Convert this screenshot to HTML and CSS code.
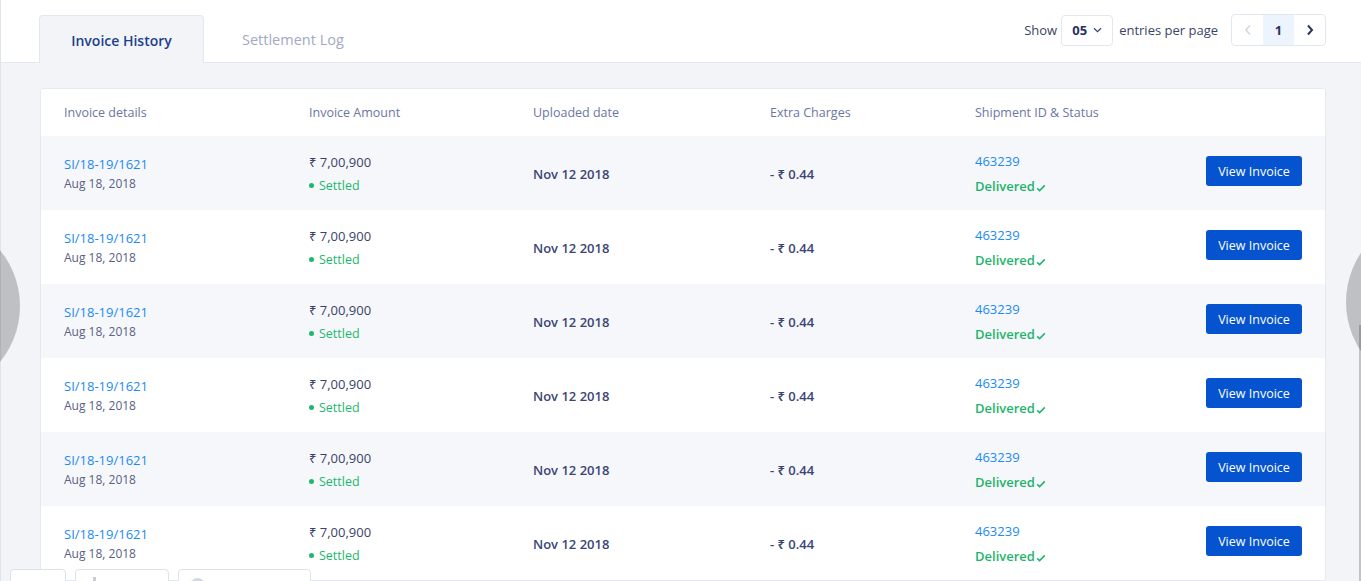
FILE: index.html
```html
<!DOCTYPE html>
<html lang="en">
<head>
<meta charset="utf-8">
<title>Invoices</title>
<link rel="stylesheet" href="styles.css">
</head>
<body>
<div class="app">
  <header class="topbar">
    <nav class="tabs">
      <div class="tab active">Invoice History</div>
      <div class="tab">Settlement Log</div>
    </nav>
    <div class="controls">
      <span class="lbl">Show</span>
      <div class="select"><span>05</span>
        <svg width="9" height="6" viewBox="0 0 9 6"><path d="M1 1.2 L4.5 4.6 L8 1.2" fill="none" stroke="#3a4470" stroke-width="1.2"/></svg>
      </div>
      <span class="lbl">entries per page</span>
      <div class="pager">
        <div class="pg"><svg width="8" height="12" viewBox="0 0 8 12"><path d="M6 1.5 L2 6 L6 10.5" fill="none" stroke="#d3d7e1" stroke-width="1.6"/></svg></div>
        <div class="pg cur">1</div>
        <div class="pg"><svg width="8" height="12" viewBox="0 0 8 12"><path d="M2 1.5 L6 6 L2 10.5" fill="none" stroke="#2c3563" stroke-width="2"/></svg></div>
      </div>
    </div>
  </header>
  <main class="main">
    <section class="card">
      <div class="row head">
        <div>Invoice details</div>
        <div>Invoice Amount</div>
        <div>Uploaded date</div>
        <div>Extra Charges</div>
        <div>Shipment ID &amp; Status</div>
        <div></div>
      </div>
      <div class="row alt">
        <div class="c-inv"><div class="inv-no">SI/18-19/1621</div><div class="inv-date">Aug 18, 2018</div></div>
        <div class="c-amt"><div class="amt">₹ 7,00,900</div><div class="settled"><i class="dot"></i>Settled</div></div>
        <div class="strong">Nov 12 2018</div>
        <div class="strong">- ₹ 0.44</div>
        <div class="c-ship"><div class="ship-id">463239</div><div class="deliv">Delivered<svg width="10" height="8" viewBox="0 0 10 8"><path d="M1.2 4.4 L3.6 6.6 L8.8 1.4" fill="none" stroke="#1db46a" stroke-width="1.5"/></svg></div></div>
        <div class="c-btn"><button class="btn">View Invoice</button></div>
      </div>
      <div class="row">
        <div class="c-inv"><div class="inv-no">SI/18-19/1621</div><div class="inv-date">Aug 18, 2018</div></div>
        <div class="c-amt"><div class="amt">₹ 7,00,900</div><div class="settled"><i class="dot"></i>Settled</div></div>
        <div class="strong">Nov 12 2018</div>
        <div class="strong">- ₹ 0.44</div>
        <div class="c-ship"><div class="ship-id">463239</div><div class="deliv">Delivered<svg width="10" height="8" viewBox="0 0 10 8"><path d="M1.2 4.4 L3.6 6.6 L8.8 1.4" fill="none" stroke="#1db46a" stroke-width="1.5"/></svg></div></div>
        <div class="c-btn"><button class="btn">View Invoice</button></div>
      </div>
      <div class="row alt">
        <div class="c-inv"><div class="inv-no">SI/18-19/1621</div><div class="inv-date">Aug 18, 2018</div></div>
        <div class="c-amt"><div class="amt">₹ 7,00,900</div><div class="settled"><i class="dot"></i>Settled</div></div>
        <div class="strong">Nov 12 2018</div>
        <div class="strong">- ₹ 0.44</div>
        <div class="c-ship"><div class="ship-id">463239</div><div class="deliv">Delivered<svg width="10" height="8" viewBox="0 0 10 8"><path d="M1.2 4.4 L3.6 6.6 L8.8 1.4" fill="none" stroke="#1db46a" stroke-width="1.5"/></svg></div></div>
        <div class="c-btn"><button class="btn">View Invoice</button></div>
      </div>
      <div class="row">
        <div class="c-inv"><div class="inv-no">SI/18-19/1621</div><div class="inv-date">Aug 18, 2018</div></div>
        <div class="c-amt"><div class="amt">₹ 7,00,900</div><div class="settled"><i class="dot"></i>Settled</div></div>
        <div class="strong">Nov 12 2018</div>
        <div class="strong">- ₹ 0.44</div>
        <div class="c-ship"><div class="ship-id">463239</div><div class="deliv">Delivered<svg width="10" height="8" viewBox="0 0 10 8"><path d="M1.2 4.4 L3.6 6.6 L8.8 1.4" fill="none" stroke="#1db46a" stroke-width="1.5"/></svg></div></div>
        <div class="c-btn"><button class="btn">View Invoice</button></div>
      </div>
      <div class="row alt">
        <div class="c-inv"><div class="inv-no">SI/18-19/1621</div><div class="inv-date">Aug 18, 2018</div></div>
        <div class="c-amt"><div class="amt">₹ 7,00,900</div><div class="settled"><i class="dot"></i>Settled</div></div>
        <div class="strong">Nov 12 2018</div>
        <div class="strong">- ₹ 0.44</div>
        <div class="c-ship"><div class="ship-id">463239</div><div class="deliv">Delivered<svg width="10" height="8" viewBox="0 0 10 8"><path d="M1.2 4.4 L3.6 6.6 L8.8 1.4" fill="none" stroke="#1db46a" stroke-width="1.5"/></svg></div></div>
        <div class="c-btn"><button class="btn">View Invoice</button></div>
      </div>
      <div class="row">
        <div class="c-inv"><div class="inv-no">SI/18-19/1621</div><div class="inv-date">Aug 18, 2018</div></div>
        <div class="c-amt"><div class="amt">₹ 7,00,900</div><div class="settled"><i class="dot"></i>Settled</div></div>
        <div class="strong">Nov 12 2018</div>
        <div class="strong">- ₹ 0.44</div>
        <div class="c-ship"><div class="ship-id">463239</div><div class="deliv">Delivered<svg width="10" height="8" viewBox="0 0 10 8"><path d="M1.2 4.4 L3.6 6.6 L8.8 1.4" fill="none" stroke="#1db46a" stroke-width="1.5"/></svg></div></div>
        <div class="c-btn"><button class="btn">View Invoice</button></div>
      </div>
    </section>
  </main>
</div>

<div class="nav-circle left"></div>
<div class="nav-circle right"></div>
<div class="scroll-line"></div>

<div class="dock">
  <div class="dock-item w1"></div>
  <div class="dock-item w2"><i class="dock-icon"></i></div>
  <div class="dock-item w3"><i class="dock-avatar"></i></div>
</div>
</body>
</html>
```

FILE: styles.css
```css
* { box-sizing: border-box; }
html, body { margin: 0; padding: 0; }
body {
  font-family: "Open Sans", "Noto Sans", "Liberation Sans", sans-serif;
  background: #f3f4f8;
  color: #3a4470;
  overflow: hidden;
  height: 581px;
}
.app {
  border-left: 1px solid #dfe3ea;
  height: 581px;
  display: flex;
  flex-direction: column;
}
.topbar {
  height: 63px;
  flex: none;
  background: #fff;
  border-bottom: 1px solid #e3e7ef;
  display: flex;
  justify-content: space-between;
  align-items: flex-end;
  padding: 0 35px 0 38px;
}
.tabs {
  display: flex;
  align-items: flex-end;
  margin-bottom: -1px;
}
.tab {
  height: 48px;
  line-height: 48px;
  padding-top: 1px;
  font-size: 14.5px;
  font-weight: 500;
  color: #a1a9c5;
  padding: 1px 36px 0 38px;
}
.tab.active {
  width: 165px;
  padding: 1px 0 0;
  text-align: center;
  font-size: 14px;
  background: #f3f4f8;
  border: 1px solid #e3e7ef;
  border-bottom: none;
  border-radius: 4px 4px 0 0;
  color: #203f8d;
  font-weight: 600;
}
.controls {
  align-self: flex-start;
  margin-top: 14px;
  display: flex;
  align-items: center;
}
.lbl {
  font-size: 13px;
  color: #3b4466;
}
.select {
  margin: 0 6px 0 4px;
  width: 52px;
  height: 31px;
  border: 1px solid #e3e7ef;
  border-radius: 4px;
  display: flex;
  align-items: center;
  justify-content: center;
  gap: 6px;
  font-size: 13px;
  font-weight: 700;
  color: #27315f;
}
.pager {
  margin-left: 13px;
  display: flex;
  height: 32px;
  border: 1px solid #e3e7ef;
  border-radius: 4px;
  overflow: hidden;
}
.pg {
  width: 31px;
  display: flex;
  align-items: center;
  justify-content: center;
  font-size: 13px;
  font-weight: 700;
  color: #2c3563;
}
.pg.cur { background: #eef4fd; }

.main {
  flex: 1;
  padding: 25px 35px 0 39px;
}
.card {
  background: #fff;
  border: 1px solid #e6e9f1;
  border-radius: 4px;
  overflow: hidden;
}
.row {
  display: grid;
  grid-template-columns: 245px 224px 237px 205px 1fr 120px;
  align-items: center;
  padding: 2px 23px 0;
  height: 74px;
  background: #fff;
}
.row.alt { background: #f6f7fb; }
.row.head {
  height: 47px;
  padding-top: 0;
  font-size: 12.5px;
  color: #6c769f;
  font-weight: 500;
}
.inv-no {
  font-size: 13px;
  line-height: 20px;
  color: #1a8bf5;
  font-weight: 500;
}
.inv-date {
  font-size: 12px;
  line-height: 20px;
  color: #5a6283;
}
.amt {
  font-size: 13px;
  line-height: 23px;
  color: #3a4268;
}
.settled {
  font-size: 12.5px;
  line-height: 23px;
  color: #1cb86c;
  font-weight: 500;
  display: flex;
  align-items: center;
}
.dot {
  width: 5px;
  height: 5px;
  border-radius: 50%;
  background: #1cb86c;
  margin: 0 5px 0 0;
}
.strong {
  font-size: 13px;
  font-weight: 600;
  color: #3b4575;
}
.ship-id {
  font-size: 13px;
  line-height: 25px;
  color: #1a8bf5;
  font-weight: 500;
}
.deliv {
  font-size: 13px;
  line-height: 25px;
  color: #1db46a;
  font-weight: 600;
  display: flex;
  align-items: center;
}
.deliv svg { margin: 3px 0 0 1px; }
.c-btn { display: flex; justify-content: flex-end; margin-bottom: 6px; }
.btn {
  width: 96px;
  height: 30px;
  border: none;
  border-radius: 3px;
  background: #0553cf;
  color: #fff;
  font-family: inherit;
  font-size: 12.5px;
  font-weight: 500;
  padding: 0;
}

.nav-circle {
  position: fixed;
  width: 176px;
  height: 176px;
  border-radius: 50%;
  background: rgba(0, 0, 0, 0.21);
}
.nav-circle.left { left: -156px; top: 218px; }
.nav-circle.right { left: 1346px; top: 214px; }
.scroll-line {
  position: fixed;
  left: 1359px;
  top: 325px;
  width: 2px;
  height: 256px;
  background: rgba(0, 0, 0, 0.2);
}
.dock {
  position: fixed;
  left: 10px;
  top: 569px;
  display: flex;
  gap: 9px;
}
.dock-item {
  height: 24px;
  background: #fff;
  border: 1px solid #dde1e8;
  border-radius: 4px;
  position: relative;
}
.w1 { width: 56px; }
.w2 { width: 94px; }
.w3 { width: 133px; }
.dock-icon {
  position: absolute;
  left: 17px;
  top: 7px;
  width: 3px;
  height: 8px;
  background: #c9ccd3;
}
.dock-avatar {
  position: absolute;
  left: 11px;
  top: 8px;
  width: 15px;
  height: 15px;
  border-radius: 50%;
  background: #d3d6dd;
}
```
